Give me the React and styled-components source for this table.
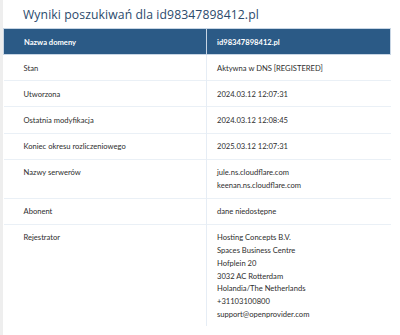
import React from 'react'
import styled, { createGlobalStyle } from 'styled-components'

const GlobalStyle = createGlobalStyle`
  html, body {
    margin: 0;
    padding: 0;
    background: #ffffff;
  }
  body {
    font-family: 'Lato', 'Liberation Sans', sans-serif;
  }
`

const rows = [
  { label: 'Stan', value: ['Aktywna w DNS [REGISTERED]'] },
  { label: 'Utworzona', value: ['2024.03.12 12:07:31'] },
  { label: 'Ostatnia modyfikacja', value: ['2024.03.12 12:08:45'] },
  { label: 'Koniec okresu rozliczeniowego', value: ['2025.03.12 12:07:31'] },
  { label: 'Nazwy serwerów', value: ['jule.ns.cloudflare.com', 'keenan.ns.cloudflare.com'] },
  { label: 'Abonent', value: ['dane niedostępne'] },
  {
    label: 'Rejestrator',
    value: [
      'Hosting Concepts B.V.',
      'Spaces Business Centre',
      'Hofplein 20',
      '3032 AC Rotterdam',
      'Holandia/The Netherlands',
      '+31103100800',
      'support@openprovider.com',
    ],
  },
]

const App = () => {
  return (
    <>
      <GlobalStyle />
      <Page>
        <Title>Wyniki poszukiwań dla id98347898412.pl</Title>
        <Table>
          <thead>
            <tr>
              <HeadCell>Nazwa domeny</HeadCell>
              <HeadCell $value>id98347898412.pl</HeadCell>
            </tr>
          </thead>
          <tbody>
            {rows.map((row, i) => (
              <Row key={row.label} $last={i === rows.length - 1}>
                <LabelCell>{row.label}</LabelCell>
                <ValueCell>
                  {row.value.map((line) => (
                    <Line key={line}>{line}</Line>
                  ))}
                </ValueCell>
              </Row>
            ))}
          </tbody>
        </Table>
      </Page>
    </>
  )
}

export default App

const Page = styled.div`
  width: 400px;
  height: 335px;
  box-sizing: border-box;
  border-left: 3px solid #eeeeee;
  padding: 7px 9px 0 0;
`

const Title = styled.h1`
  margin: 0 0 6px 20px;
  font-family: 'Open Sans', 'DejaVu Sans', sans-serif;
  font-weight: 400;
  font-size: 12.2px;
  line-height: 15px;
  letter-spacing: 0.1px;
  color: #2b4a6c;
`

const Table = styled.table`
  width: 388px;
  border-collapse: collapse;
  table-layout: fixed;
  font-size: 7.6px;
  color: #2e2e2e;
`

const HeadCell = styled.th`
  width: ${(p) => (p.$value ? 'auto' : '203px')};
  box-sizing: border-box;
  height: 26px;
  padding: 0 0 0 ${(p) => (p.$value ? '10px' : '20px')};
  background: #2b5a86;
  border: 1px solid #c7d5e4;
  color: #ffffff;
  font-weight: 700;
  text-align: left;
  line-height: 12px;
`

const Row = styled.tr`
  border-bottom: ${(p) => (p.$last ? 'none' : '1px solid #eaf0f6')};
`

const LabelCell = styled.td`
  box-sizing: border-box;
  padding: 6.5px 0 6px 20px;
  vertical-align: top;
  line-height: 12.7px;
  border-right: 1px solid #e6edf5;
`

const ValueCell = styled.td`
  padding: 6.5px 0 6px 10px;
  vertical-align: top;
  line-height: 12.7px;
`

const Line = styled.div`
  white-space: nowrap;
`
